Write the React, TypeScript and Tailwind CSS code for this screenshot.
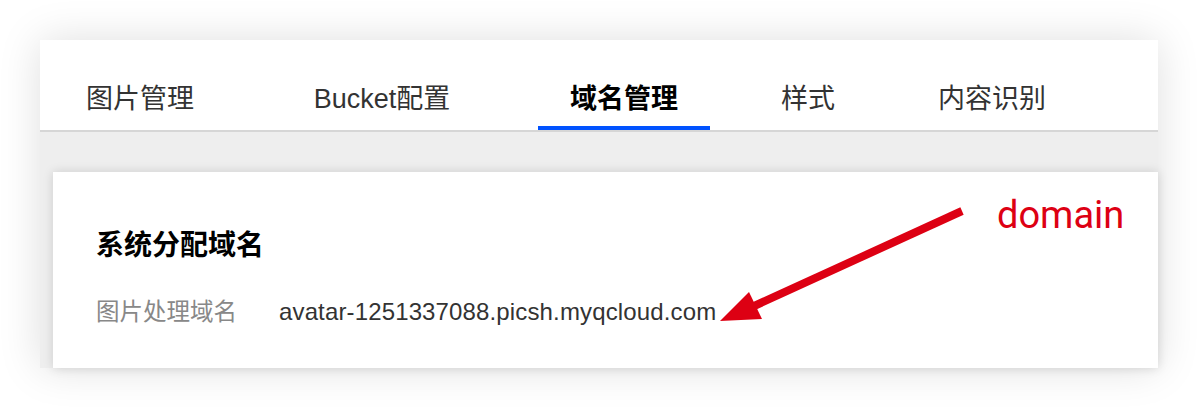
import React from "react";

const tabs = [
  { label: "图片管理", w: "w-[170px]", ml: "ml-[15px]" },
  { label: "Bucket配置", w: "w-[202px]", ml: "ml-[56px]" },
  { label: "域名管理", w: "w-[172px]", ml: "ml-[55px]", active: true },
  { label: "样式", w: "w-[114px]", ml: "ml-[41px]" },
  { label: "内容识别", w: "w-[170px]", ml: "ml-[42px]" },
];

export default function App() {
  return (
    <div
      className="relative w-[1198px] h-[408px] bg-white overflow-hidden p-[40px]"
      style={{ fontFamily: '"Liberation Sans", "Noto Sans CJK SC", sans-serif' }}
    >
      <div className="w-[1118px] h-[328px] bg-white shadow-[0_0_40px_rgba(0,0,0,0.13)] flex flex-col">
        <div className="h-[92px] flex items-end border-b-2 border-[#d6d6d6]">
          {tabs.map((t) => (
            <div key={t.label} className={`${t.w} ${t.ml} flex flex-col items-center`}>
              <span
                className={`text-[27px] leading-[27px] mb-[13px] whitespace-nowrap ${
                  t.active ? "font-bold text-black" : "text-[#333333]"
                }`}
              >
                {t.label}
              </span>
              <div className={`w-full h-[4px] ${t.active ? "bg-[#0052ff]" : "bg-transparent"}`} />
            </div>
          ))}
        </div>
        <div className="flex-1 bg-[#eeeeee] pl-[13px] pt-[40px] flex">
          <div className="flex-1 bg-white shadow-[0_0_10px_rgba(0,0,0,0.14)] pl-[43px] pt-[60px]">
            <div className="text-[28px] leading-[28px] font-bold text-black">系统分配域名</div>
            <div className="flex items-center mt-[40px] h-[24px]">
              <span className="w-[183px] text-[23.5px] leading-[24px] text-[#888888] whitespace-nowrap">
                图片处理域名
              </span>
              <span className="text-[24px] leading-[24px] tracking-[0.14px] text-[#333333] whitespace-nowrap">
                avatar-1251337088.picsh.myqcloud.com
              </span>
            </div>
          </div>
        </div>
      </div>

      <div
        className="absolute left-[997px] top-[195px] text-[38px] leading-[40px] text-[#dd0013]"
        style={{ fontFamily: "Roboto, sans-serif" }}
      >
        domain
      </div>
      <svg
        className="absolute left-0 top-0 pointer-events-none"
        width="1198"
        height="408"
        viewBox="0 0 1198 408"
      >
        <line x1="962" y1="211" x2="752" y2="307" stroke="#dd0013" strokeWidth="8" />
        <polygon points="720,321 749,292 762,319" fill="#dd0013" />
      </svg>
    </div>
  );
}
